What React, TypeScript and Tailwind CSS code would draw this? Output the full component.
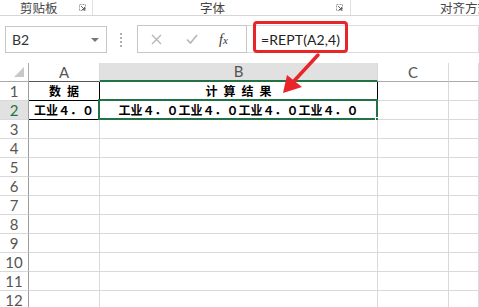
import React from "react";

const cols = ["A", "B", "C", ""];
const rows = Array.from({ length: 12 }, (_, i) => i + 1);

const grid = "border-r border-b border-[#d9d9d9]";

function Launcher() {
  return (
    <svg width="7" height="7" viewBox="0 0 7 7" className="mt-[4px]">
      <path d="M0.5 0.5h6v6h-6z" fill="none" stroke="#9a9a9a" strokeWidth="1" strokeDasharray="2 1" />
      <path d="M2 2l3.5 3.5M5.5 3v2.5H3" fill="none" stroke="#666" strokeWidth="1" />
    </svg>
  );
}

function Cell({ row, col }: { row: number; col: number }) {
  // col: 0 = A, 1 = B, 2 = C, 3 = D
  const boxed = row <= 2 && col <= 1;
  const border = boxed ? "border-r border-b border-black" : grid;

  let content: React.ReactNode = null;
  if (row === 1 && col === 0) content = "数据";
  if (row === 1 && col === 1) content = "计算结果";
  if (row === 2 && col === 0) content = "工业4.0";
  if (row === 2 && col === 1) content = "工业4.0工业4.0工业4.0工业4.0";

  return (
    <div
      className={`relative flex items-center justify-center bg-white ${border} font-['Noto_Sans_CJK_SC',sans-serif] text-[12px] font-bold text-black [font-variant-east-asian:full-width] ${
        row === 1 ? "tracking-[6px] pl-[6px]" : ""
      }`}
    >
      {content}
      {row === 2 && col === 1 && (
        <>
          <div className="absolute -left-[2px] -top-[2px] -right-[1px] -bottom-[1px] border-2 border-[#217346]" />
          <div className="absolute -right-[4px] -bottom-[4px] w-[6px] h-[6px] bg-[#217346] border border-white" />
        </>
      )}
    </div>
  );
}

export default function App() {
  return (
    <div className="relative w-[479px] h-[307px] overflow-hidden bg-white font-['Lato','Liberation_Sans',sans-serif]">
      {/* Ribbon group labels */}
      <div className="flex h-[16px] border-b border-[#d6d6d6] text-[12.5px] leading-[15px] text-[#444] font-['Noto_Sans_CJK_SC',sans-serif]">
        <div className="flex shrink-0 w-[93px] h-[15px] border-r border-[#e0e0e0]">
          <span className="ml-[20px]">剪贴板</span>
          <span className="ml-auto mr-[6px]">
            <Launcher />
          </span>
        </div>
        <div className="flex shrink-0 w-[258px] h-[15px] border-r border-[#e0e0e0]">
          <span className="ml-[107px]">字体</span>
          <span className="ml-auto mr-[7px]">
            <Launcher />
          </span>
        </div>
        <div className="flex shrink-0 h-[15px] whitespace-nowrap">
          <span className="ml-[89px]">对齐方式</span>
        </div>
      </div>

      {/* Formula bar */}
      <div className="flex items-start h-[47px] pt-[10px]">
        <div className="shrink-0 ml-[5px] w-[102px] h-[27px] border border-[#c6c6c6] flex items-center pl-[6px] pr-[7px]">
          <span className="text-[14px] text-[#333]">B2</span>
          <svg width="8" height="4" viewBox="0 0 8 4" className="ml-auto">
            <path d="M0 0h8L4 4z" fill="#777" />
          </svg>
        </div>
        <div className="ml-[13px] mt-[7px] flex flex-col gap-[2px]">
          {[0, 1, 2, 3].map((i) => (
            <div key={i} className="w-[2px] h-[2px] bg-[#b0b0b0]" />
          ))}
        </div>
        <div className="shrink-0 ml-[15px] w-[110px] h-[28px] -mt-[1px] border border-[#c6c6c6] flex items-center">
          <svg width="11" height="11" viewBox="0 0 11 11" className="ml-[13px]">
            <path d="M1 1l9 9M10 1l-9 9" stroke="#b5b5b5" strokeWidth="1.3" />
          </svg>
          <svg width="12" height="10" viewBox="0 0 12 10" className="ml-[24px]">
            <path d="M1 5.5l3.5 3.5L11 1" fill="none" stroke="#b5b5b5" strokeWidth="1.6" />
          </svg>
          <span className="ml-[21px] font-['Liberation_Serif',serif] italic text-[14px] text-[#333]">
            f<span className="text-[11px]">x</span>
          </span>
        </div>
        <div className="flex-1 h-[28px] -mt-[1px] border-y border-r border-[#dcdcdc] flex items-center pl-[14px]">
          <span className="text-[14px] text-[#222] tracking-[0.1px]">=REPT(A2,4)</span>
        </div>
      </div>

      {/* Sheet */}
      <div className="grid grid-cols-[29px_71px_278px_71px_1fr] auto-rows-[19px]">
        <div className="flex items-end justify-end pr-[4px] pb-[4px] bg-white border-r border-b border-[#ababab]">
          <svg width="10" height="10" viewBox="0 0 10 10">
            <path d="M10 0v10H0z" fill="#c8c8c8" />
          </svg>
        </div>
        {cols.map((c, i) => (
          <div
            key={c + i}
            className={`flex items-center justify-center text-[15px] text-[#555] border-r border-[#d9d9d9] ${
              i === 1
                ? "bg-[#e1e1e1] border-b-2 border-b-[#217346]"
                : i === 0
                  ? "bg-white border-b border-b-[#555]"
                  : "bg-white border-b border-b-[#ababab]"
            }`}
          >
            {c}
          </div>
        ))}
        {rows.map((r) => (
          <React.Fragment key={r}>
            <div
              className={`flex items-center justify-center text-[15px] border-r border-r-[#9e9e9e] border-b border-b-[#d9d9d9] ${
                r === 2 ? "bg-[#e1e1e1] text-[#217346]" : "bg-white text-[#555]"
              }`}
            >
              {r}
            </div>
            {[0, 1, 2, 3].map((c) => (
              <Cell key={c} row={r} col={c} />
            ))}
          </React.Fragment>
        ))}
      </div>

      {/* Annotation: red box and arrow */}
      <div className="absolute left-[253px] top-[21px] w-[95px] h-[32px] border-[3px] border-[#e8262a] rounded-[4px]" />
      <svg className="absolute left-0 top-0 pointer-events-none" width="479" height="307" viewBox="0 0 479 307">
        <path d="M318 55L294 81" stroke="#e8262a" strokeWidth="3.5" strokeLinecap="round" />
        <path d="M283 93L287 75L302 87z" fill="#e8262a" />
      </svg>
    </div>
  );
}
